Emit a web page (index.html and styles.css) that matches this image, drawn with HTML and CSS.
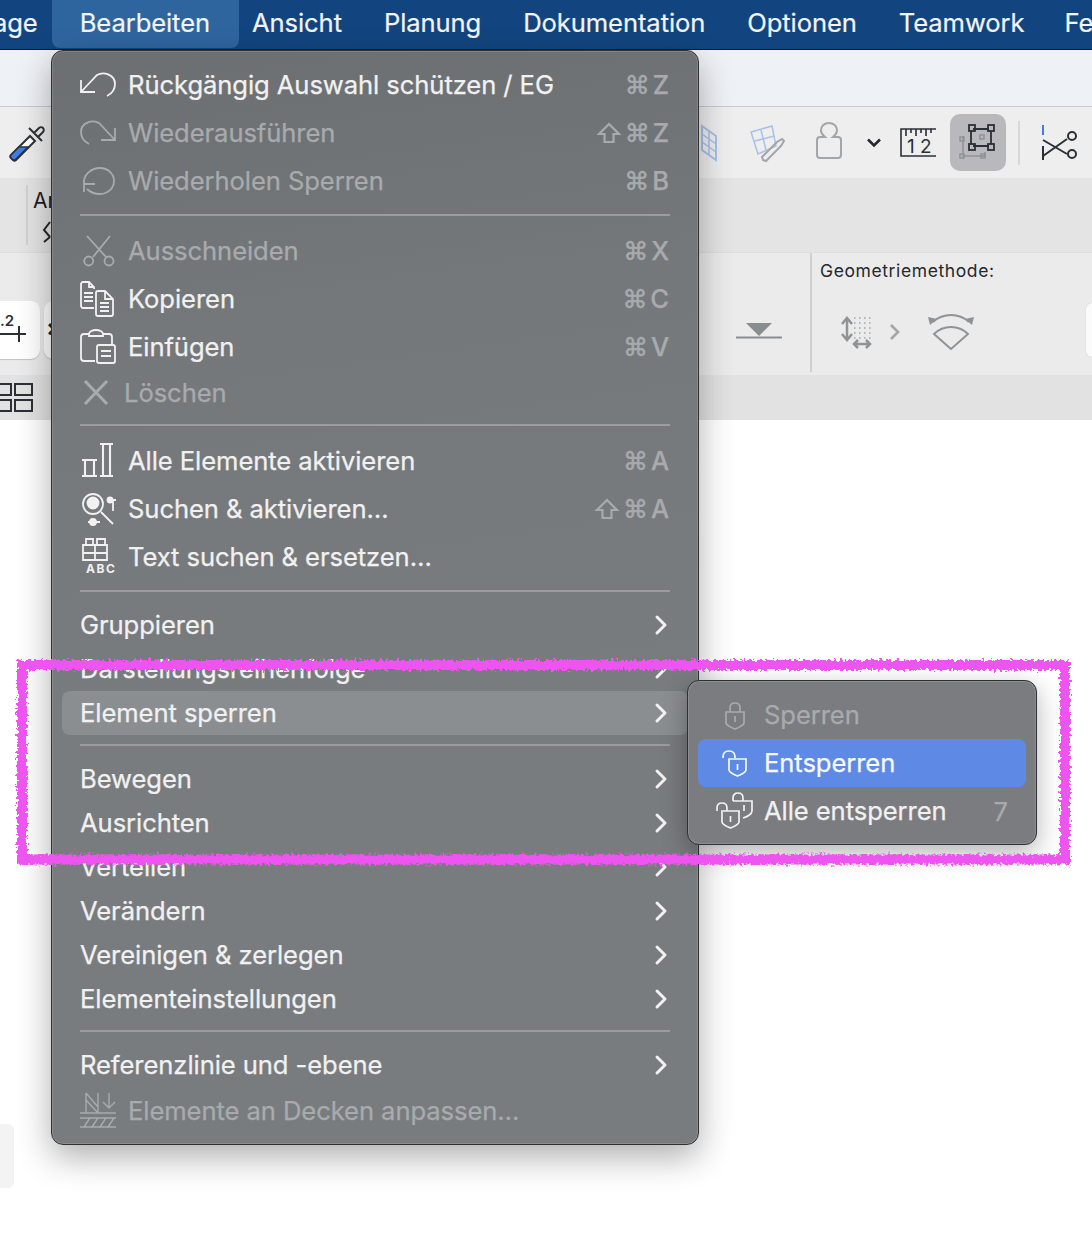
FILE: index.html
```html
<!DOCTYPE html>
<html lang="de">
<head>
<meta charset="utf-8">
<title>Bearbeiten Menü</title>
<link rel="stylesheet" href="styles.css">
</head>
<body>
<div class="app">
  <nav class="menubar">
    <span class="mb-item mb-first">age</span>
    <span class="mb-item mb-active">Bearbeiten</span>
    <span class="mb-item">Ansicht</span>
    <span class="mb-item">Planung</span>
    <span class="mb-item">Dokumentation</span>
    <span class="mb-item">Optionen</span>
    <span class="mb-item mb-team">Teamwork</span>
    <span class="mb-item">Fe</span>
  </nav>
  <div class="titlebar"></div>
  <div class="toolbar">
    <svg class="tb-dropper" width="38" height="38" viewBox="0 0 38 38" fill="none"><path d="M5 36 3 34c-1-1-1-2 0-3L22 12l5 5L8 36c-1 1-2 1-3 0Z" fill="#fff" stroke="#2e3338" stroke-width="2"/><path d="M4 35c-1-1-2-3-1-4l8-8h9L8 35c-1 1-3 1-4 0Z" fill="#3f7de8" stroke="#2e3338" stroke-width="1.5"/><path d="M21 4l13 13M26 9l5-5c1-1 3-1 4 0s1 3 0 4l-5 5" stroke="#2e3338" stroke-width="2"/></svg>
    <svg class="tb-wall" width="18" height="38" viewBox="0 0 18 38" fill="none" stroke="#a9c0ea" stroke-width="2"><path d="M2 2 16 12V36L2 26Z"/><path d="M9 7V31M2 10l14 10M2 18l14 10" stroke-width="1.5"/></svg>
    <svg class="tb-gridpen" width="36" height="38" viewBox="0 0 36 38" fill="none" stroke="#a9c0ea" stroke-width="1.5"><path d="M1 8 22 2l4 20-18 8Z"/><path d="M5 17 24 12M11 6l5 20"/><path d="M13 36l-1-3L27 18l5-3 2 2-3 5-15 15Z" stroke="#a3a6a8" stroke-width="2"/></svg>
    <svg class="tb-weight" width="26" height="38" viewBox="0 0 26 38" fill="none" stroke="#a3a6a8" stroke-width="2"><path d="M9 15C6.500 13 5 11 5 8.500 5 4 8.500 1 13 1S21 4 21 8.500C21 11 19.500 13 17 15H22C24 15 25 16 25 18V33C25 35 24 36 22 36H4C2 36 1 35 1 33V18C1 16 2 15 4 15Z"/></svg>
    <svg class="tb-chev" width="14" height="10" viewBox="0 0 14 10" fill="none" stroke="#26282b" stroke-width="2.6"><path d="M1 1.500 7 7.500 13 1.500"/></svg>
    <svg class="tb-ruler" width="36" height="30" viewBox="0 0 36 30" fill="none" stroke="#2b3036" stroke-width="1.600"><path d="M36 1H1V28H36"/><path d="M6 1V8M11 1V5M16 1V8M21 1V5M26 1V8M31 1V5"/><text x="7" y="25" class="tb-num" stroke="none">1 2</text></svg>
    <span class="tb-selected"><svg width="38" height="38" viewBox="0 0 38 38" fill="none"><g stroke="#8f9396" stroke-width="1.500"><path d="M4 12V32H26V28M8 32H26"/><rect x="1" y="13" width="4" height="4"/><rect x="1" y="30" width="4" height="4"/><rect x="22" y="30" width="4" height="4"/><rect x="21" y="11" width="4" height="4"/></g><g stroke="#2b3036" stroke-width="1.800"><path d="M14 5H30M12 7V20M32 7V20M14 22H30"/><rect x="10" y="1" width="6" height="6"/><rect x="29" y="1" width="6" height="6"/><rect x="10" y="20" width="6" height="6"/><rect x="29" y="20" width="6" height="6"/></g></svg></span>
    <span class="tb-sep"></span>
    <svg class="tb-scissors" width="36" height="38" viewBox="0 0 36 38" fill="none" stroke="#2b3036" stroke-width="2"><path d="M1 1V11" stroke="#3f7de8"/><path d="M1 22V36"/><path d="M1 16 25 30M1 32 25 15"/><circle cx="30" cy="12" r="4"/><circle cx="30" cy="30" r="4"/></svg>
  </div>
  <div class="infobar">
    <span class="info-sep"></span>
    <div class="info-cell">
      <span class="info-label">Ar</span>
      <svg width="14" height="22" viewBox="0 0 14 22" fill="none" stroke="#26282b" stroke-width="2"><path d="M7 1 1 9l6 7M1 21l6-5"/></svg>
    </div>
  </div>
  <div class="panel">
    <div class="panel-btn"><span class="panel-num">.2</span><svg class="panel-plus" width="26" height="16" viewBox="0 0 26 16" fill="none" stroke="#2b3036" stroke-width="2"><path d="M0 8H26M19 0V16"/></svg></div>
    <div class="panel-btn panel-btn2">×</div>
    <svg class="panel-tri" width="46" height="16" viewBox="0 0 46 16"><path d="M10 0H36L23 13Z" fill="#8a8d8f"/><path d="M0 14.500H46" stroke="#8a8d8f" stroke-width="2"/></svg>
    <span class="panel-sep"></span>
    <div class="geo">
      <div class="geo-label">Geometriemethode:</div>
      <div class="geo-icons">
        <svg width="32" height="32" viewBox="0 0 32 32" fill="none"><path d="M7 3V23M2 8l5-6 5 6M2 18l5 6 5-6" stroke="#8f9396" stroke-width="2.500"/><path d="M14 28H30M18 24l-4 4 4 4M26 24l4 4-4 4" stroke="#8f9396" stroke-width="2.500"/><path d="M14 2H32M14 7H32M14 12H32M14 17H32M14 22H32" stroke="#a3a6a8" stroke-width="1.500" stroke-dasharray="1.500 3.500"/></svg>
        <svg width="10" height="16" viewBox="0 0 10 16" fill="none" stroke="#a3a6a8" stroke-width="2.600"><path d="M1 1 8 8 1 15"/></svg>
        <svg class="geo-arc" width="46" height="36" viewBox="0 0 46 36" fill="none" stroke="#8f9396" stroke-width="2"><path d="M23 35 6 20a24 24 0 0 1 34 0Z"/><path d="M5 8a27 27 0 0 1 36 0"/><path d="M0 3 9 5 2 11ZM46 3 37 5 44 11Z" fill="#8f9396" stroke="none"/></svg>
      </div>
    </div>
    <div class="panel-edge"></div>
  </div>
  <div class="tabbar">
    <svg class="tab-grid" width="33" height="30" viewBox="0 0 33 30" fill="none" stroke="#2b3036" stroke-width="2"><rect x="-6" y="1" width="17" height="11"/><rect x="15" y="1" width="17" height="11"/><rect x="-6" y="17" width="17" height="11"/><rect x="15" y="17" width="17" height="11"/></svg>
  </div>
  <main class="canvas"><div class="canvas-box"></div></main>
</div>

<div class="menu">
  <div class="row tall">
    <svg class="ico" viewBox="0 0 36 36"><path d="M1 13V25H15M1 25 17 8C24 4 35 8 35 17 35 23 31 27 27 29"/></svg>
    <span class="label">Rückgängig Auswahl schützen / EG</span>
    <span class="keys"><span class="cmd">⌘</span><span class="key">Z</span></span>
  </div>
  <div class="row tall off">
    <svg class="ico" viewBox="0 0 36 36"><path d="M35 13V25H21M35 25 19 8C12 4 1 8 1 17 1 23 5 27 9 29"/></svg>
    <span class="label">Wiederausführen</span>
    <span class="keys"><svg class="shift" viewBox="0 0 22 20"><path d="M11 1 21 11H15.500V19H6.500V11H1Z"/></svg><span class="cmd">⌘</span><span class="key">Z</span></span>
  </div>
  <div class="row tall off">
    <svg class="ico" viewBox="0 0 36 36"><path d="M4 17V29M4 21H15M4 21C3 12 11 5 20 5 28 5 34 11 34 18 34 25 28 31 20 31 14 31 10 29 7 26"/></svg>
    <span class="label">Wiederholen Sperren</span>
    <span class="keys"><span class="cmd">⌘</span><span class="key">B</span></span>
  </div>
  <div class="sep"></div>
  <div class="row tall off">
    <svg class="ico" viewBox="0 0 36 36"><path d="M7 3 26 24M30 3 13 24"/><circle cx="8.700" cy="28" r="4.500"/><circle cx="29" cy="28" r="4.500"/></svg>
    <span class="label">Ausschneiden</span>
    <span class="keys"><span class="cmd">⌘</span><span class="key">X</span></span>
  </div>
  <div class="row tall">
    <svg class="ico" viewBox="0 0 36 36"><path d="M14 27H3C2 27 1 26 1 25V3C1 2 2 1 3 1H9L14 6V8M9 1V6H14M4 12H13M4 16H13M4 20H13"/><path d="M16 12C16 11 17 10 18 10H25L33 18V33C33 34 32 35 31 35H18C17 35 16 34 16 33ZM25 10V18H33M20 22H29M20 26H29M20 30H29"/></svg>
    <span class="label">Kopieren</span>
    <span class="keys"><span class="cmd">⌘</span><span class="key">C</span></span>
  </div>
  <div class="row tall">
    <svg class="ico" viewBox="0 0 36 36"><path d="M15 32H4C2 32 1 31 1 29V8C1 6 2 5 4 5H9M23 5H29C31 5 32 6 32 8V15"/><path d="M9 7H23V5C23 3 20 1 16 1S9 3 9 5Z"/><rect x="17" y="16" width="18" height="18" rx="2"/><path d="M21 22H31M21 27H31"/></svg>
    <span class="label">Einfügen</span>
    <span class="keys"><span class="cmd">⌘</span><span class="key">V</span></span>
  </div>
  <div class="row off">
    <svg class="ico ico-x" viewBox="0 0 32 36"><path d="M5 6 27 29M27 6 5 29"/></svg>
    <span class="label">Löschen</span>
  </div>
  <div class="sep"></div>
  <div class="row tall">
    <svg class="ico ico-bold" viewBox="0 0 36 36"><path d="M2 17H17M2 33H17M5 17V33M14 17V33M20 1H33M20 33H33M23 1V33M30 1V33"/></svg>
    <span class="label">Alle Elemente aktivieren</span>
    <span class="keys"><span class="cmd">⌘</span><span class="key">A</span></span>
  </div>
  <div class="row tall">
    <svg class="ico" viewBox="0 0 36 36"><circle cx="13" cy="13" r="10"/><circle class="fill" cx="13" cy="12" r="5.500"/><path d="M21 21 33 33M8 31H20M30 9H36M33 9V20"/><circle class="fill" cx="13" cy="31" r="3"/><circle class="fill" cx="30" cy="9" r="2.500"/></svg>
    <span class="label">Suchen &amp; aktivieren…</span>
    <span class="keys"><svg class="shift" viewBox="0 0 22 20"><path d="M11 1 21 11H15.500V19H6.500V11H1Z"/></svg><span class="cmd">⌘</span><span class="key">A</span></span>
  </div>
  <div class="row tall">
    <svg class="ico" viewBox="0 0 36 36"><path d="M6 6V0H13V6M17 6V0H25V6M3 6H15V21H3ZM15 6H27V21H15ZM3 14H27"/><text class="abc" x="6" y="34">ABC</text></svg>
    <span class="label">Text suchen &amp; ersetzen…</span>
  </div>
  <div class="sep"></div>
  <div class="row sub"><span class="label">Gruppieren</span><svg class="chev" viewBox="0 0 13 20"><path d="M2 2 10 10 2 18"/></svg></div>
  <div class="row sub"><span class="label">Darstellungsreihenfolge</span><svg class="chev" viewBox="0 0 13 20"><path d="M2 2 10 10 2 18"/></svg></div>
  <div class="row sub current"><span class="label">Element sperren</span><svg class="chev" viewBox="0 0 13 20"><path d="M2 2 10 10 2 18"/></svg></div>
  <div class="sep"></div>
  <div class="row sub"><span class="label">Bewegen</span><svg class="chev" viewBox="0 0 13 20"><path d="M2 2 10 10 2 18"/></svg></div>
  <div class="row sub"><span class="label">Ausrichten</span><svg class="chev" viewBox="0 0 13 20"><path d="M2 2 10 10 2 18"/></svg></div>
  <div class="row sub"><span class="label">Verteilen</span><svg class="chev" viewBox="0 0 13 20"><path d="M2 2 10 10 2 18"/></svg></div>
  <div class="row sub"><span class="label">Verändern</span><svg class="chev" viewBox="0 0 13 20"><path d="M2 2 10 10 2 18"/></svg></div>
  <div class="row sub"><span class="label">Vereinigen &amp; zerlegen</span><svg class="chev" viewBox="0 0 13 20"><path d="M2 2 10 10 2 18"/></svg></div>
  <div class="row sub"><span class="label">Elementeinstellungen</span><svg class="chev" viewBox="0 0 13 20"><path d="M2 2 10 10 2 18"/></svg></div>
  <div class="sep"></div>
  <div class="row sub"><span class="label">Referenzlinie und -ebene</span><svg class="chev" viewBox="0 0 13 20"><path d="M2 2 10 10 2 18"/></svg></div>
  <div class="row tall off">
    <svg class="ico ico-thin" viewBox="0 0 36 36"><path d="M0 20H36M0 25H36M0 34H36M6 20V0M18 20V0M6 0 18 14M6 7 18 20M29 0V15M23 9 29 15 35 9M4 34 10 25M12 34 18 25M20 34 26 25M28 34 34 25"/></svg>
    <span class="label">Elemente an Decken anpassen…</span>
  </div>
</div>

<div class="submenu">
  <div class="row tall off">
    <svg class="ico ico-mid" viewBox="0 0 36 36"><path d="M14 15V11C14 8 16 6 19 6S24 8 24 11V15"/><path d="M10 15H28V26C28 28 22 31 19 32 16 31 10 28 10 26ZM19 19V25"/></svg>
    <span class="label">Sperren</span>
  </div>
  <div class="row tall hot">
    <svg class="ico ico-mid" viewBox="0 0 36 36"><path d="M7 13V12C7 8 9 6 13 6S19 8 19 12V13"/><path d="M13 14H30V25C30 27 24 30 21.500 31 19 30 13 27 13 25ZM21.500 19V25"/></svg>
    <span class="label">Entsperren</span>
  </div>
  <div class="row tall">
    <svg class="ico ico-mid" viewBox="0 0 36 36"><path d="M1 18V15C1 12 3 10 6 10S11 12 11 15V18"/><path d="M6 18H23V29C23 31 17 34 14.500 35 12 34 6 31 6 29ZM14.500 23V29"/><path d="M17 8V5C17 2 19 0 22 0S27 2 27 5V8"/><path d="M17 8H36V18C36 21 31 24 27 25M28 12V18"/></svg>
    <span class="label">Alle entsperren</span>
    <span class="count">7</span>
  </div>
</div>

<svg class="scribble" width="1092" height="1236" viewBox="0 0 1092 1236" fill="none">
  <defs>
    <filter id="rough" x="-5%" y="-20%" width="110%" height="140%">
      <feTurbulence type="fractalNoise" baseFrequency="0.35" numOctaves="2" seed="4" result="n"/>
      <feDisplacementMap in="SourceGraphic" in2="n" scale="8"/>
    </filter>
  </defs>
  <path class="scribble-line" d="M22 665 1065 665 1065 859.500 22 859.500Z" filter="url(#rough)"/>
</svg>
</body>
</html>
```
FILE: styles.css
```css
* { box-sizing: border-box; }
html, body { margin: 0; padding: 0; height: 100%; background: #fff; overflow: hidden; }
body { font-family: Inter, "Liberation Sans", sans-serif; position: relative; width: 1092px; height: 1236px; }
svg { display: block; flex: none; overflow: visible; }

.app { display: flex; flex-direction: column; height: 1236px; }

.menubar { display: flex; height: 50px; flex: none; align-items: flex-start; background: #12457f; border-bottom: 1px solid #0d1a2a; overflow: hidden; white-space: nowrap; font-size: 25.600px; letter-spacing: -0.100px; color: #f2f4f7; -webkit-text-stroke: .2px currentColor; }
.mb-item { flex: none; height: 48px; line-height: 46px; padding: 0 21px; }
.mb-first { padding: 0 21px 0 0; margin-left: -7px; }
.mb-active { padding: 0 29px 0 28px; margin: 0 -8px 0 -7px; background: #2f659f; border-radius: 0 0 8px 8px; }
.mb-team { padding-right: 19px; }

.titlebar { height: 57px; flex: none; background: #eef1f6; border-bottom: 1px solid #c9cbce; }

.toolbar { height: 71px; flex: none; display: flex; align-items: center; background: #eeeeee; }
.tb-dropper { margin-left: 8px; }
.tb-wall { margin-left: 654px; }
.tb-gridpen { margin-left: 32px; }
.tb-weight { margin: 0 0 3px 30px; }
.tb-chev { margin-left: 25px; }
.tb-ruler { margin-left: 19px; }
.tb-num { font: 19px Inter, sans-serif; fill: #2b3036; }
.tb-selected { margin-left: 14px; width: 56px; height: 57px; border-radius: 10px; background: #b9b9bd; display: flex; align-items: center; justify-content: center; }
.tb-sep { margin-left: 12px; width: 2px; height: 44px; background: #d8d8d8; }
.tb-scissors { margin-left: 22px; }

.infobar { height: 75px; flex: none; display: flex; align-items: center; background: #e4e4e4; border-bottom: 1px solid #dedede; }
.info-sep { margin-left: 26px; width: 2px; height: 60px; background: #d2d2d2; }
.info-cell { margin-left: 5px; display: flex; flex-direction: column; }
.info-label { font-size: 21px; line-height: 26px; color: #1e2023; }
.info-cell svg { margin: 7px 0 0 10px; }

.panel { height: 122px; flex: none; display: flex; align-items: flex-start; background: #ebebeb; }
.panel-btn { margin-top: 48px; width: 40px; height: 58px; background: #fff; border-radius: 0 9px 9px 0; box-shadow: 0 1px 1px rgba(0,0,0,.18); overflow: hidden; }
.panel-num { display: block; padding-top: 12px; font-size: 15px; line-height: 16px; font-weight: 600; color: #2b3036; }
.panel-plus { margin-top: -3px; }
.panel-btn2 { margin-left: 4px; width: 20px; border-radius: 9px 0 0 9px; color: #26282b; font-size: 24px; font-weight: 700; line-height: 54px; padding-left: 2px; }
.panel-tri { margin: 70px 0 0 672px; }
.panel-sep { margin-left: 28px; width: 2px; height: 119px; background: #cfcfcf; }
.geo { margin-left: 8px; padding-top: 8px; }
.geo-label { font-size: 17.500px; line-height: 20px; letter-spacing: .6px; color: #26282b; }
.geo-icons { display: flex; align-items: center; margin: 33px 0 0 20px; gap: 18px; }
.geo-arc { margin-left: 10px; }
.panel-edge { margin: 50px 0 0 auto; width: 6px; height: 54px; background: #fbfbfb; border-radius: 8px 0 0 8px; box-shadow: 0 0 1px rgba(0,0,0,.25); }

.tabbar { height: 45px; flex: none; display: flex; align-items: center; background: #e2e2e2; }

.canvas { flex: 1; padding-top: 704px; background: #fff; }
.canvas-box { width: 14px; height: 64px; background: #f3f3f3; border-radius: 0 6px 6px 0; }

.menu, .submenu { position: absolute; color: #f1f1f1; font-size: 25.600px; letter-spacing: -0.080px; border: 1px solid #2e3033; -webkit-text-stroke: .25px currentColor; }
.menu { left: 51px; top: 50px; width: 648px; height: 1095px; padding: 10px 10px 8px 10px; border-radius: 12px; background: linear-gradient(172deg, #6c6f72 0%, #75787b 25%, #797c7f 60%, #797c7f 100%); box-shadow: inset 0 0 0 1px rgba(255,255,255,.14), 0 12px 34px rgba(0,0,0,.32); }
.submenu { left: 687px; top: 680px; width: 350px; height: 165px; padding: 10px 10px 8px 10px; border-radius: 12px; background: #7b7c80; box-shadow: inset 0 0 0 1px rgba(255,255,255,.14), 0 8px 26px rgba(0,0,0,.3); }

.row { display: flex; align-items: center; height: 44px; padding: 0 18px; border-radius: 8px; white-space: nowrap; }
.row.tall { height: 48px; }
.label { flex: 1; line-height: 1; }
.off { color: #a8abae; }
.keys { display: flex; align-items: center; justify-content: flex-end; color: #a8abae; margin-right: 1px; }
.shift { width: 22px; height: 20px; margin-right: 5px; fill: none; stroke: currentColor; stroke-width: 2.200; }
.cmd { font-family: "DejaVu Sans", sans-serif; font-size: 25px; margin-right: 3px; line-height: 1; -webkit-text-stroke: .5px currentColor; }
.key { font-size: 25.600px; line-height: 1; font-weight: 500; }
.current { background: #8b8e91; }
.hot { background: #5e8ae6; color: #f7f9fd; }
.count { color: #a8abae; }
.sep { height: 22px; flex: none; padding: 9px 18px 11px; background-clip: content-box; background-color: #9a9c9f; }

.ico { width: 36px; height: 36px; margin-right: 12px; fill: none; stroke: currentColor; stroke-width: 1.800; -webkit-text-stroke: 0; }
.ico .fill { fill: currentColor; }
.ico-x { width: 32px; margin-right: 12px; stroke-width: 3; }
.ico-thin { stroke-width: 1.400; }
.ico-mid { stroke-width: 1.700; }
.ico-bold { stroke-width: 2.100; }
.abc { font: 700 12px Inter, sans-serif; fill: currentColor; stroke: none; letter-spacing: 1.500px; }
.chev { width: 13px; height: 20px; margin-right: 2px; fill: none; stroke: currentColor; stroke-width: 3; stroke-linecap: round; stroke-linejoin: round; }

.scribble { position: absolute; left: 0; top: 0; pointer-events: none; }
.scribble-line { stroke: #ee55f0; stroke-width: 10; }
```
